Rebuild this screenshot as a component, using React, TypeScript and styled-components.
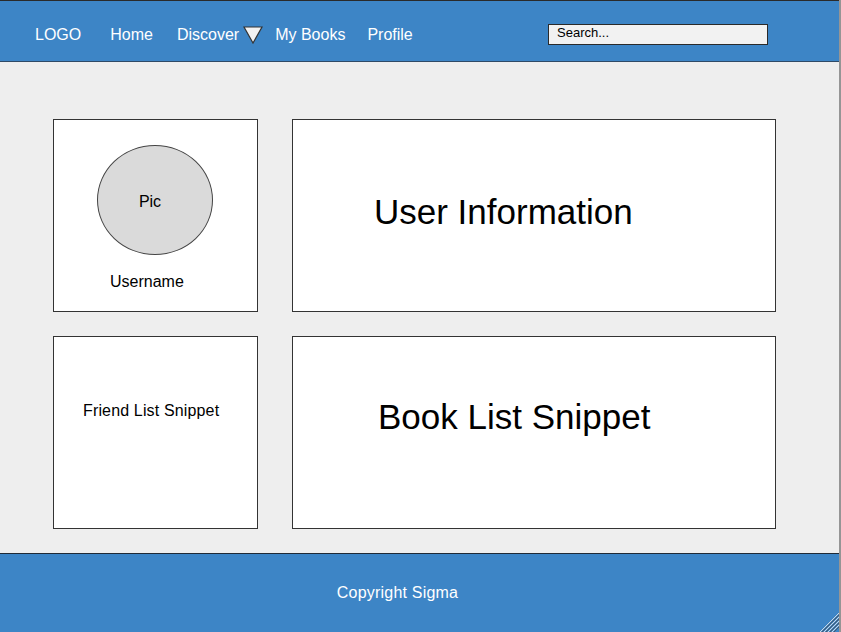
import React from "react";
import styled, { createGlobalStyle } from "styled-components";

const Global = createGlobalStyle`
  html, body { margin: 0; padding: 0; background: #eeeeee; }
  body { font-family: "Liberation Sans", Arial, sans-serif; }
  * { box-sizing: border-box; }
`;

const Page = styled.div`
  position: relative;
  width: 841px;
  height: 632px;
  display: flex;
  flex-direction: column;
  overflow: hidden;
  border-right: 2px solid rgba(40, 40, 40, 0.45);
`;

const Header = styled.header`
  height: 62px;
  flex: none;
  background: #3d85c6;
  border-top: 1px solid #2a2a2a;
  border-bottom: 1px solid #2f4a66;
  display: flex;
  align-items: center;
  padding: 7px 71px 0 35px;
  color: #ffffff;
`;

const Logo = styled.div`
  font-size: 16px;
  margin-right: 17px;
`;

const NavList = styled.nav`
  display: flex;
  align-items: center;
`;

const NavLink = styled.a`
  font-size: 16px;
  color: #ffffff;
  text-decoration: none;
  padding: 0 10px 0 12px;
  white-space: nowrap;
`;

const Dropdown = styled.div`
  display: flex;
  align-items: center;
  gap: 4px;
  padding-left: 14px;
  font-size: 16px;
`;

const Caret = styled.svg`
  display: block;
  flex: none;
`;

const Search = styled.div`
  margin-left: auto;
  width: 220px;
  height: 21px;
  background: #f2f2f2;
  border: 1px solid #2a2a2a;
  color: #000;
  font-size: 13px;
  line-height: 16px;
  padding-left: 8px;
`;

const Main = styled.main`
  flex: 1;
  background: #eeeeee;
  padding: 57px 0 0 53px;
  display: grid;
  grid-template-columns: 205px 484px;
  grid-template-rows: 193px 193px;
  column-gap: 34px;
  row-gap: 24px;
  align-content: start;
`;

const Card = styled.section`
  background: #ffffff;
  border: 1px solid #333333;
  color: #000;
`;

const ProfileCard = styled(Card)`
  display: flex;
  flex-direction: column;
  align-items: flex-start;
  padding: 25px 0 0 43px;
`;

const Pic = styled.div`
  width: 116px;
  height: 110px;
  border-radius: 50%;
  background: #dadada;
  border: 1px solid #444444;
  display: flex;
  align-items: center;
  justify-content: center;
  padding: 3px 10px 0 0;
  font-size: 16px;
`;

const Username = styled.div`
  font-size: 16px;
  margin-top: 18px;
  margin-left: 13px;
`;

const SmallText = styled.div`
  font-size: 16px;
  padding: 65px 0 0 29px;
  letter-spacing: 0.15px;
`;

const BigText = styled.div<{ $pl: number; $pt: number }>`
  font-size: 35px;
  padding: ${(p) => p.$pt}px 0 0 ${(p) => p.$pl}px;
`;

const Footer = styled.footer`
  height: 79px;
  flex: none;
  background: #3d85c6;
  border-top: 1px solid #1f2a36;
  display: flex;
  align-items: center;
  justify-content: center;
  padding-right: 44px;
  color: #ffffff;
  font-size: 16px;
  letter-spacing: 0.2px;
`;

const Grip = styled.svg`
  position: absolute;
  right: 0;
  bottom: 0;
`;

export default function App() {
  return (
    <>
      <Global />
      <Page>
        <Header>
          <Logo>LOGO</Logo>
          <NavList>
            <NavLink>Home</NavLink>
            <Dropdown>
              <span>Discover</span>
              <Caret width="20" height="18" viewBox="0 0 20 18">
                <path d="M1 1 L19 1 L10 17 Z" fill="#f2f2f2" stroke="#333" strokeWidth="1.2" />
              </Caret>
            </Dropdown>
            <NavLink>My Books</NavLink>
            <NavLink>Profile</NavLink>
          </NavList>
          <Search>Search...</Search>
        </Header>
        <Main>
          <ProfileCard>
            <Pic>Pic</Pic>
            <Username>Username</Username>
          </ProfileCard>
          <Card>
            <BigText $pl={81} $pt={72}>User Information</BigText>
          </Card>
          <Card>
            <SmallText>Friend List Snippet</SmallText>
          </Card>
          <Card>
            <BigText $pl={85} $pt={60}>Book List Snippet</BigText>
          </Card>
        </Main>
        <Footer>Copyright Sigma</Footer>
        <Grip width="20" height="20" viewBox="0 0 20 20">
          <g stroke="#cfd8e0" strokeWidth="1">
            <line x1="20" y1="1" x2="1" y2="20" />
            <line x1="20" y1="5" x2="5" y2="20" />
            <line x1="20" y1="9" x2="9" y2="20" />
            <line x1="20" y1="13" x2="13" y2="20" />
          </g>
          <g stroke="#4a5a6a" strokeWidth="1">
            <line x1="20" y1="3" x2="3" y2="20" />
            <line x1="20" y1="7" x2="7" y2="20" />
            <line x1="20" y1="11" x2="11" y2="20" />
            <line x1="20" y1="15" x2="15" y2="20" />
          </g>
        </Grip>
      </Page>
    </>
  );
}
